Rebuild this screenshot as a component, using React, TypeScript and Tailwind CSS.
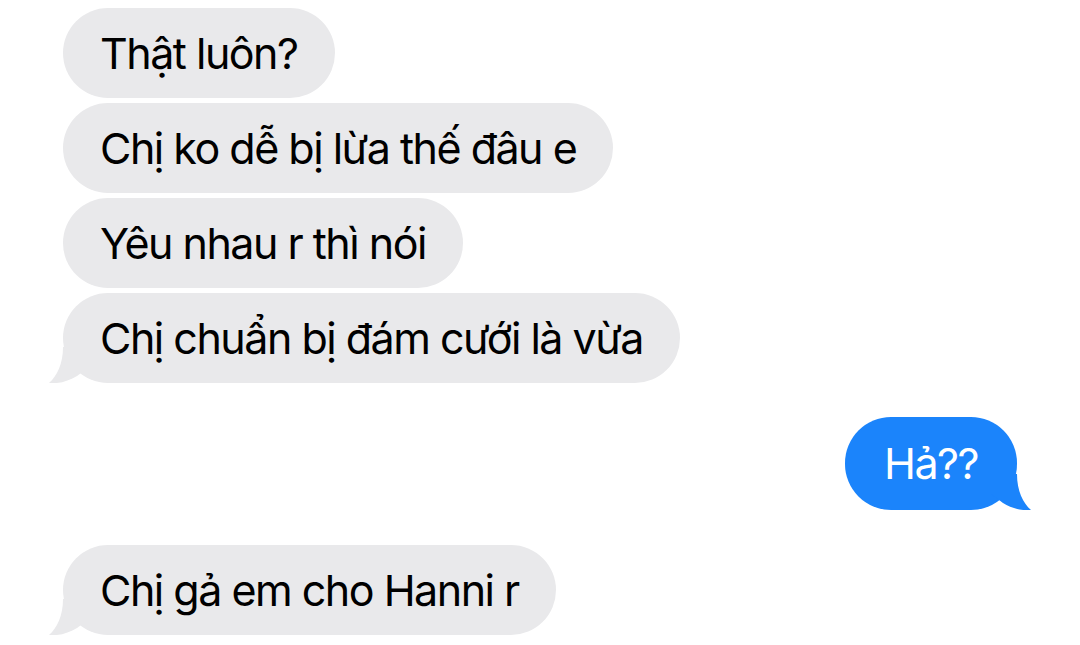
import React from "react"

type Msg = { text: string; from: "them" | "me"; tail?: boolean }

const messages: Msg[] = [
  { text: "Thật luôn?", from: "them" },
  { text: "Chị ko dễ bị lừa thế đâu e", from: "them" },
  { text: "Yêu nhau r thì nói", from: "them" },
  { text: "Chị chuẩn bị đám cưới là vừa", from: "them", tail: true },
  { text: "Hả??", from: "me", tail: true },
  { text: "Chị gả em cho Hanni r", from: "them", tail: true },
]

function Tail({ color, flip }: { color: string; flip?: boolean }) {
  return (
    <svg
      width="44"
      height="36"
      viewBox="0 0 44 36"
      className={`absolute bottom-0 ${flip ? "right-[-14px] -scale-x-100" : "left-[-14px]"}`}
    >
      <path d="M14 0 C14 17 8 29 0 36 C10 37 20 34 28 29 L40 20 L40 0 Z" fill={color} />
    </svg>
  )
}

function Bubble({ msg }: { msg: Msg }) {
  const mine = msg.from === "me"
  return (
    <div className={`flex ${mine ? "justify-end" : "justify-start"}`}>
      <div
        className={`relative flex items-center rounded-[46px] text-[43px] leading-none tracking-[-1.5px] ${
          mine
            ? "h-[93px] px-[39px] bg-[#1b84fb] text-white"
            : "h-[90px] px-[37px] bg-[#e9e9eb] text-black"
        }`}
      >
        {msg.tail && <Tail color={mine ? "#1b84fb" : "#e9e9eb"} flip={mine} />}
        <span className="relative">{msg.text}</span>
      </div>
    </div>
  )
}

export default function App() {
  return (
    <div
      className="w-[1080px] h-[645px] bg-white overflow-hidden pt-[8px] pl-[63px] pr-[63px]"
      style={{ fontFamily: "Inter, 'Noto Sans', sans-serif" }}
    >
      <div className="flex flex-col gap-[5px]">
        <Bubble msg={messages[0]} />
        <Bubble msg={messages[1]} />
        <Bubble msg={messages[2]} />
        <Bubble msg={messages[3]} />
      </div>
      <div className="mt-[34px]">
        <Bubble msg={messages[4]} />
      </div>
      <div className="mt-[35px]">
        <Bubble msg={messages[5]} />
      </div>
    </div>
  )
}
